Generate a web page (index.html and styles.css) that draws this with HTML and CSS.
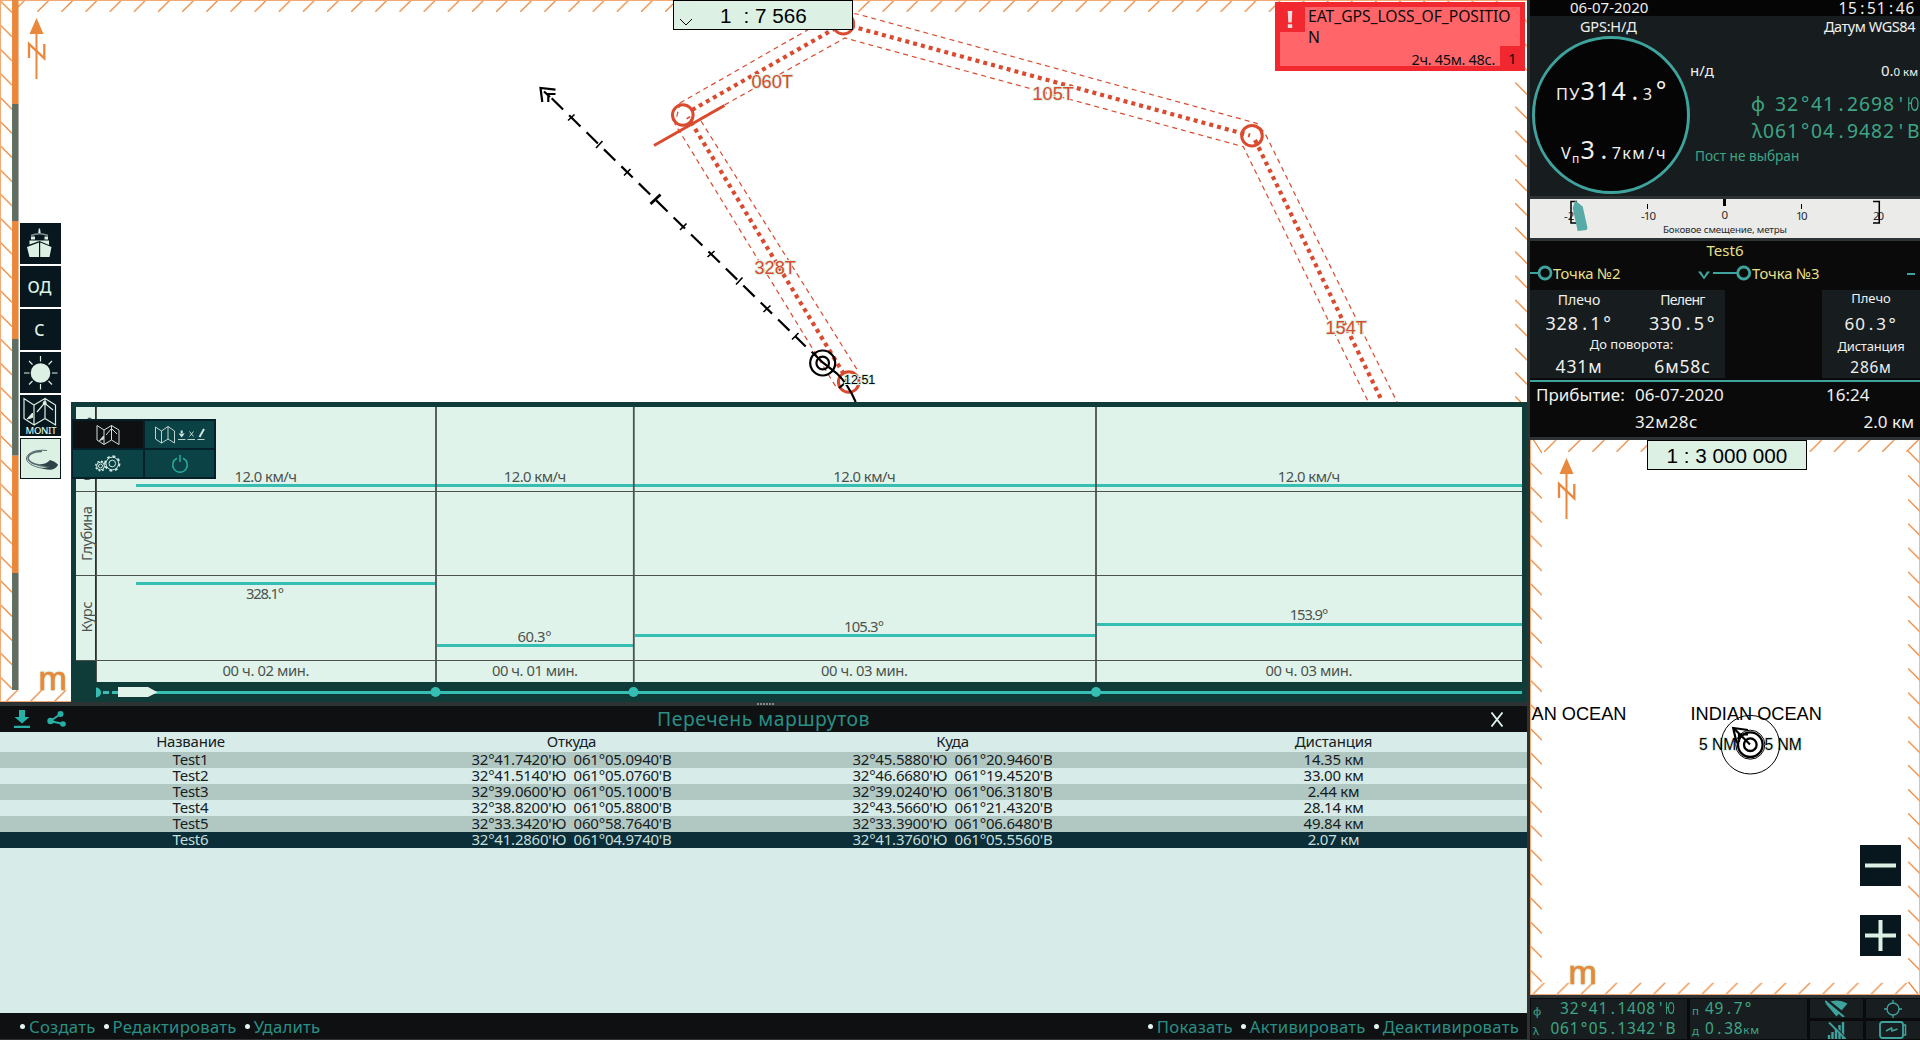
FILE: index.html
```html
<!DOCTYPE html>
<html lang="ru">
<head>
<meta charset="utf-8">
<title>Перечень маршрутов</title>
<link rel="stylesheet" href="styles.css">
</head>
<body>
<div class="app">
  <main class="main">
    <section class="chart">
      <svg class="chart-canvas" width="1527" height="702" viewBox="0 0 1527 702">
        <defs>
          <pattern id="hTop" patternUnits="userSpaceOnUse" x="13" y="0" width="24.15" height="12"><path class="hatch" d="M0 12 12 0"/></pattern>
          <pattern id="hLeft" patternUnits="userSpaceOnUse" x="0" y="0.5" width="12" height="24.15"><path class="hatch" d="M0 0 12 12"/></pattern>
          <pattern id="hRight" patternUnits="userSpaceOnUse" x="1515" y="82.3" width="12" height="24.15"><path class="hatch" d="M0 0 12 12"/></pattern>
          <pattern id="hBottom" patternUnits="userSpaceOnUse" x="5.7" y="690" width="24.15" height="12"><path class="hatch" d="M0 12 12 0"/></pattern>
        </defs>
        <rect x="18" y="0" width="1497" height="12" fill="url(#hTop)"/>
        <rect x="0" y="0" width="12" height="690" fill="url(#hLeft)"/>
        <rect x="1515" y="0" width="12" height="402" fill="url(#hRight)"/>
        <rect x="0" y="690" width="72" height="12" fill="url(#hBottom)"/>
        <path class="frame" d="M0 .5H1527M.5 0V702M0 701.5H72"/>
        <g class="scalebar">
          <path class="sb-a" d="M15.3 0V104M15.3 221V339M15.3 455.5V573"/>
          <path class="sb-b" d="M15.3 104V221M15.3 339V455.5M15.3 573V690"/>
        </g>
        <g class="north"><path class="north-fill" d="M36.5 18 43.5 34H29.5Z"/><path d="M36.5 33V79" stroke-width="2"/><path d="M29 58V44L44.3 58.3V44" stroke-width="2.3"/></g>
        <text class="unit" x="38.5" y="690" textLength="29">m</text>

        <g class="corridor">
          <path d="M680 103 838 12.500 857 14 1256.700 123.300 1265 133.300 1397 402"/>
          <path d="M701 118 845 38 1243.300 146.700 1368.300 402"/>
          <path d="M680 103 675 124 836 387"/>
          <path d="M701 121 858 371"/>
        </g>
        <g class="track">
          <path d="M848 381 688 117"/><path d="M692 110 841 25"/><path d="M843 24 1250 135.500"/><path d="M1255 140 1382 401"/>
        </g>
        <g class="waypoints">
          <circle cx="682.800" cy="115" r="10.300"/><circle cx="843.300" cy="23.700" r="10.300"/><circle cx="1252" cy="135.700" r="10.300"/><circle cx="848.700" cy="382" r="10.300"/>
          <path d="M654 145.500 724.500 105.500"/>
        </g>
        <g class="leg-label">
          <text x="751.500" y="88">060T</text><text x="754.500" y="273.500">328T</text><text x="1032.500" y="100">105T</text><text x="1325.500" y="333.500">154T</text>
        </g>
        <g class="vessel">
          <path d="M551.700 98.300 805.700 346.500" stroke-dasharray="15.900 8.450"/>
          <path d="M811.700 351.700 823 362.700 836.700 373.300Q848 384 855.700 402"/>
          <path d="M839 388 845 383"/>
          <circle cx="822.700" cy="363" r="12.500"/><circle cx="822.700" cy="363" r="6.300"/>
          <path d="M542.300 102 540.500 88 555.500 89.700M548.300 102V94H555.500M544 91.500 550 97"/>
          <path class="tick" d="M568 120.500 574.500 114.500M596 148 602.500 141M624 175.500 630.500 169M680 230 686.500 223.500M707.500 257 714.500 251M736 284.500 742.500 277.500M763.500 312 770.500 305.500M792 339.500 798.500 333"/>
          <path d="M650.500 204 660.500 194.500" stroke-width="2.800"/>
        </g>
        <text class="time-label" x="844" y="384">12:51</text>
      </svg>

      <div class="scale scale-main">
        <svg width="14" height="8" viewBox="0 0 14 8"><path d="M1 1 7 7 13 1" fill="none" stroke="#000"/></svg>
        <span class="scale-one">1</span><span>: 7 566</span>
      </div>

      <div class="alert">
        <span class="alert-icon"><svg width="6" height="17" viewBox="0 0 6 17"><path d="M.7 0H5.300L4.700 11.500H1.300ZM.8 13.300H5.200V17H.8Z" fill="#e4dede"/></svg></span>
        <p class="alert-text">EAT_GPS_LOSS_OF_POSITION</p>
        <span class="alert-time">2ч. 45м. 48с.</span><span class="alert-count">1</span>
      </div>

      <nav class="tools">
        <button class="tool"><svg width="41" height="41" viewBox="0 0 41 41"><g fill="#dcf1e4"><path d="M18.200 10 18.800 5.500H20L20.700 10ZM9.500 17.500H29V22L19.500 18 9.500 21.500Z"/><path d="M7 24 19 19.500V34H9.500ZM20.200 19.500 31.500 24 29.500 34H20.200Z"/><path d="M11 13.500H15V16.500H11ZM24.500 13.500H28V16.500H24.500Z"/></g><path d="M11 12.500Q19.500 9 28 12.500" fill="none" stroke="#7f9190" stroke-width="1.500"/></svg></button>
        <button class="tool">ОД</button>
        <button class="tool">С</button>
        <button class="tool"><svg width="41" height="41" viewBox="0 0 41 41"><circle cx="20.500" cy="21" r="9.800" fill="#dcf1e4"/><path d="M20.500 4V9.500M20.500 32V37.500M4 21H9.500M32 21H37.500M9 9 12.500 12.500M32 9 28.500 12.500M9 32.500 12.500 29M32 32.500 28.500 29" stroke="#dcf1e4" stroke-width="1.200"/></svg></button>
        <button class="tool tool-monit"><svg width="41" height="41" viewBox="0 0 41 41"><path d="M4 3.500V23.500L14 30V10ZM14 10 25 3.500V23.500L14 30M25 3.500 35.500 10V30L25 23.500M17 17 24.500 8 33 15" fill="none" stroke="#dcf1e4" stroke-width="1.200"/><path d="M7 24 12.500 18V22.500Z" fill="#dcf1e4" stroke="#dcf1e4"/><circle cx="24.700" cy="8" r="2" fill="#dcf1e4"/><text x="5.500" y="39" textLength="31">MONIT</text></svg></button>
        <button class="tool tool-light"><svg width="41" height="41" viewBox="0 0 41 41"><path d="M26 11.500C13 10 5 15 5.500 20 6 25 16 30 31 30" fill="none" stroke="#53686b" stroke-width="1"/><path d="M21 12.500C12 12 6.500 16 7.300 20 8.500 24 17 27 27 27.500" fill="none" stroke="#53686b" stroke-width="1.600"/><path d="M18 25.500Q26 25 29 21 34 22 37 25.500 36 29 31 30.500 24 30.500 21 29L28 28Z" fill="#2d4347"/></svg></button>
      </nav>

      <section class="profile">
        <svg width="1456" height="300" viewBox="71 402 1456 300">
          <path class="plot" d="M76 407H95V660H76ZM97 407H1522V682H97Z"/>
          <g class="values"><path d="M136 485.500H1522M136 583.500H435M437 645.500H633M635 635.500H1095M1097 624.500H1522"/></g>
          <path class="grid" d="M76 491.500H1522M76 575.500H1522M76 660.500H1522M96.500 407V682"/>
          <path class="grid-v" d="M436 407V682M633.800 407V682M1096 407V682"/>
          <g class="plot-text">
            <text x="265.700" y="481.700" textLength="62.500">12.0 км/ч</text><text x="535" y="481.700" textLength="62.500">12.0 км/ч</text><text x="864.500" y="481.700" textLength="62.500">12.0 км/ч</text><text x="1309" y="481.700" textLength="62.500">12.0 км/ч</text>
            <text x="265" y="598.700" textLength="38">328.1°</text><text x="534.500" y="642" textLength="34">60.3°</text><text x="864" y="631.700" textLength="40">105.3°</text><text x="1309" y="620" textLength="38.500">153.9°</text>
            <text x="266" y="676.300" textLength="87">00 ч. 02 мин.</text><text x="535" y="676.300" textLength="86">00 ч. 01 мин.</text><text x="864.500" y="676.300" textLength="87">00 ч. 03 мин.</text><text x="1309" y="676.300" textLength="87">00 ч. 03 мин.</text>
            <text transform="translate(91.500 449) rotate(-90)" textLength="64">Скорость</text><text transform="translate(91.500 533.500) rotate(-90)" textLength="55">Глубина</text><text transform="translate(91.500 617) rotate(-90)" textLength="31">Курс</text>
          </g>
          <g class="timeline"><path d="M103 692.500H109M112 692.500H118M150 692.500H1522"/><path class="dot" d="M96 687.500A5 5 0 0 1 96 697.500Z"/><circle class="dot" cx="435.500" cy="692" r="5"/><circle class="dot" cx="633.500" cy="692" r="5"/><circle class="dot" cx="1096" cy="692" r="5"/></g>
          <path fill="#e0f3ea" d="M118 687H148L157.500 692.300 148 697H118Z"/>
        </svg>
      </section>

      <div class="menu">
        <button class="menu-item active"><svg width="24" height="20" viewBox="0 0 24 20"><path d="M1 .5V15L8 19.500V5ZM8 5 15.500 .5V15L8 19.500M15.500 .5 23 5V19.500L15.500 15M10 10 15.500 3.500 21 9" fill="none" stroke="#d2dfdc"/><path d="M3.500 15.500 7.500 11V14Z" fill="#d2dfdc" stroke="#d2dfdc"/></svg></button>
        <button class="menu-item"><svg width="52" height="20" viewBox="0 0 52 20"><g fill="none" stroke="#cfe5df" stroke-width=".9"><path d="M1.500 2V14L7.500 18V6ZM7.500 6 14 1.500V14L7.500 18M14 1.500 20.500 6V18L14 14"/><path d="M24 14.500H31.500M33.500 14.500H41M43.500 14.500H50.500M35.500 6.500 39.500 11.500M39.500 6.500 35.500 11.500"/><path d="M27.700 5.500V8" stroke-width="2"/><path d="M50 4 45.500 12" stroke-width="2"/></g><path d="M24.700 8.500H30.700L27.700 12.500Z" fill="#cfe5df"/></svg></button>
        <button class="menu-item"><svg width="26" height="18" viewBox="0 0 26 18"><g fill="none" stroke="#d2e8e2"><circle cx="17.300" cy="8.500" r="6.300"/><circle cx="17.300" cy="8.500" r="3.300"/><circle cx="17.300" cy="8.500" r="7.300" stroke-width="1.700" stroke-dasharray="2.900 2.830"/><circle cx="5.500" cy="11" r="3.900"/><circle cx="5.500" cy="11" r="2"/><circle cx="5.500" cy="11" r="4.800" stroke-width="1.400" stroke-dasharray="1.900 1.870"/></g></svg></button>
        <button class="menu-item"><svg width="18" height="20" viewBox="0 0 18 20"><path d="M6 4.200A7.300 7.300 0 1 0 12 4.200M9 1V8" fill="none" stroke="#27aca0" stroke-width="1.500"/></svg></button>
      </div>
    </section>

    <div class="splitter"><i></i><i></i><i></i><i></i><i></i><i></i></div>

    <section class="routes">
      <header class="routes-head">
        <div class="head-icons">
          <svg width="16" height="18" viewBox="0 0 16 18"><path d="M5 0H11V7H15.500L8 13.500 .5 7H5ZM0 15.700H16V18H0Z" fill="#27b0a6"/></svg>
          <svg width="20" height="18" viewBox="0 0 20 18"><path d="M13.500 4 3.500 11 16 14" fill="none" stroke="#27b0a6" stroke-width="2"/><circle cx="13.500" cy="4" r="3" fill="#27b0a6"/><circle cx="3.500" cy="11" r="3.200" fill="#27b0a6"/><circle cx="16" cy="14" r="2.800" fill="#27b0a6"/></svg>
        </div>
        <h1>Перечень маршрутов</h1>
        <button class="close"><svg width="14" height="15" viewBox="0 0 14 15"><path d="M1.500 .5 12.500 14.500M12.500 .5 1.500 14.500" stroke="#e4f5ee" stroke-width="1.800"/></svg></button>
      </header>
      <div class="table">
        <div class="tr th"><span>Название</span><span>Откуда</span><span>Куда</span><span>Дистанция</span></div>
        <div class="tr alt"><span>Test1</span><span>32°41.7420'Ю&nbsp; 061°05.0940'В</span><span>32°45.5880'Ю&nbsp; 061°20.9460'В</span><span>14.35 км</span></div>
        <div class="tr"><span>Test2</span><span>32°41.5140'Ю&nbsp; 061°05.0760'В</span><span>32°46.6680'Ю&nbsp; 061°19.4520'В</span><span>33.00 км</span></div>
        <div class="tr alt"><span>Test3</span><span>32°39.0600'Ю&nbsp; 061°05.1000'В</span><span>32°39.0240'Ю&nbsp; 061°06.3180'В</span><span>2.44 км</span></div>
        <div class="tr"><span>Test4</span><span>32°38.8200'Ю&nbsp; 061°05.8800'В</span><span>32°43.5660'Ю&nbsp; 061°21.4320'В</span><span>28.14 км</span></div>
        <div class="tr alt"><span>Test5</span><span>32°33.3420'Ю&nbsp; 060°58.7640'В</span><span>32°33.3900'Ю&nbsp; 061°06.6480'В</span><span>49.84 км</span></div>
        <div class="tr selected"><span>Test6</span><span>32°41.2860'Ю&nbsp; 061°04.9740'В</span><span>32°41.3760'Ю&nbsp; 061°05.5560'В</span><span>2.07 км</span></div>
      </div>
      <footer class="routes-foot">
        <div><a>Создать</a><a>Редактировать</a><a>Удалить</a></div>
        <div><a>Показать</a><a>Активировать</a><a>Деактивировать</a></div>
      </footer>
    </section>
  </main>

  <aside class="side">
    <section class="nav">
      <div class="clock"><span class="date">06-07-2020</span><span class="mono">15<i>:</i>51<i>:</i>46</span></div>
      <div class="gps"><span class="gps-src">GPS:Н/Д</span><span>Датум WGS84</span></div>
      <div class="nav-body">
        <div class="dial">
          <div class="mono dial-row course"><small>ПУ</small>314<i>.</i><small>3</small><i>°</i></div>
          <div class="mono dial-row speed"><small>V</small><sub>п</sub>3<i>.</i><small>7км<i>/</i>ч</small></div>
        </div>
        <div class="position">
          <div class="depth"><span>н/д</span><span>0.<small>0 км</small></span></div>
          <div class="mono coord"><i>φ</i><i></i>32<i>°</i>41<i>.</i>2698<i>'</i><i class="wide">Ю</i></div>
          <div class="mono coord"><i>λ</i>061<i>°</i>04<i>.</i>9482<i>'</i><i>В</i></div>
          <div class="post">Пост не выбран</div>
        </div>
      </div>
    </section>

    <svg class="offset" width="390" height="39" viewBox="1530 199 390 39">
      <g class="offset-text"><text x="1564" y="220" textLength="17">-20</text><text x="1641" y="220" textLength="15">-10</text><text x="1721.500" y="219">0</text><text x="1796" y="220" textLength="11.500">10</text><text x="1873" y="220" textLength="11">20</text><text class="offset-name" x="1663" y="233" textLength="124">Боковое смещение, метры</text></g>
      <path d="M1577 201.500H1571V223H1577M1873 201.500H1879.300V223H1873" fill="none" stroke="#000" stroke-width="1.500"/>
      <path d="M1647.500 204V209M1801.500 204V209" stroke="#000"/><path d="M1724.500 199V206" stroke="#000" stroke-width="3"/>
      <path d="M1575.300 200.500 1582.700 206.500 1587.500 228 1586.500 230 1577.700 231 1572.700 208Z" fill="#57aaa5"/>
    </svg>

    <section class="route">
      <h2>Test6</h2>
      <div class="legs">
        <div class="leg"><svg width="23" height="16" viewBox="0 0 23 16"><path d="M0 8H9" stroke="#3fa39d" stroke-width="2"/><circle cx="15" cy="8" r="6" fill="none" stroke="#3fa39d" stroke-width="2.800"/></svg><span>Точка №2</span><svg class="chev" width="14" height="9" viewBox="0 0 14 9"><path d="M1 .5H4L7 5.500 10 .5H13L7 8.500Z" fill="#3fa39d"/></svg></div>
        <div class="leg next"><svg width="39" height="16" viewBox="0 0 39 16"><path d="M0 8H24" stroke="#3fa39d" stroke-width="2"/><circle cx="30.700" cy="8" r="6" fill="none" stroke="#3fa39d" stroke-width="2.800"/></svg><span>Точка №3</span><b></b></div>
      </div>
      <div class="cards">
        <div class="card current">
          <div class="pair labels"><span>Плечо</span><span>Пеленг</span></div>
          <div class="pair mono big"><span>328<i>.</i>1<i>°</i></span><span>330<i>.</i>5<i>°</i></span></div>
          <div class="turn">До поворота:</div>
          <div class="pair mono dist"><span>431м</span><span>6м58с</span></div>
        </div>
        <div class="card following"><span class="lbl">Плечо</span><span class="mono v1">60<i>.</i>3<i>°</i></span><span class="lbl l2">Дистанция</span><span class="mono v2">286м</span></div>
      </div>
      <div class="arrival"><span>Прибытие:</span><span>06-07-2020</span><span>16:24</span><span></span><span class="eta">32м28с</span><span class="left">2.0 км</span></div>
    </section>

    <section class="overview">
      <svg class="chart-canvas" width="390" height="555" viewBox="1530 440 390 555">
        <defs>
          <pattern id="oTop" patternUnits="userSpaceOnUse" x="1544" y="440" width="24.15" height="12"><path class="hatch" d="M0 12 12 0"/></pattern>
          <pattern id="oLeft" patternUnits="userSpaceOnUse" x="1530" y="462.200" width="12" height="24.170"><path class="hatch" d="M0 0 12 12"/></pattern>
          <pattern id="oRight" patternUnits="userSpaceOnUse" x="1908" y="451" width="12" height="24.150"><path class="hatch" d="M0 0 12 12"/></pattern>
          <pattern id="oBottom" patternUnits="userSpaceOnUse" x="1532.700" y="982.500" width="24.150" height="12"><path class="hatch" d="M0 12 12 0"/></pattern>
        </defs>
        <rect x="1543" y="440" width="377" height="12" fill="url(#oTop)"/><rect x="1530" y="462" width="12" height="521" fill="url(#oLeft)"/><rect x="1908" y="451" width="12" height="532" fill="url(#oRight)"/><rect x="1532" y="982.500" width="378" height="12" fill="url(#oBottom)"/>
        <path class="hatch" d="M1533.500 440 1542 453M1908.500 982 1918 994"/>
        <path class="frame" d="M1530.500 440V995M1919.700 440V995M1530 994.500H1920"/>
        <g class="north" transform="translate(1530 440)"><path class="north-fill" d="M36.500 18 43.500 34H29.500Z"/><path d="M36.500 33V79" stroke-width="2"/><path d="M29 58V44L44.300 58.300V44" stroke-width="2.300"/></g>
        <text class="unit" x="1568.500" y="984" textLength="29">m</text>
        <text class="sea" x="1531.500" y="719.700">AN OCEAN</text><text class="sea" x="1690.500" y="719.700">INDIAN OCEAN</text>
        <g class="range"><text x="1699" y="750">5 NM</text><text x="1764.500" y="750">5 NM</text></g>
        <g class="vessel"><circle cx="1750.300" cy="744.700" r="29.300" stroke-width="1"/><circle cx="1750.300" cy="744.700" r="14.500" stroke-width="1"/><circle cx="1750.300" cy="744.700" r="12.300" stroke-width="2.300"/><circle cx="1750.300" cy="744.700" r="6.300" stroke-width="2.300"/><path d="M1750 744.500 1733.500 728M1736.500 742.500 1733.200 728 1748 730M1739 742V734.500H1748"/></g>
      </svg>
      <div class="scale scale-over">1 : 3 000 000</div>
      <div class="zoom">
        <button class="tool"><svg width="31" height="31" viewBox="0 0 31 31"><path d="M0 15.500H31" stroke="#dcf1e4" stroke-width="4"/></svg></button>
        <button class="tool"><svg width="31" height="31" viewBox="0 0 31 31"><path d="M0 15.500H31M15.500 0V31" stroke="#dcf1e4" stroke-width="4"/></svg></button>
      </div>
    </section>

    <section class="status">
      <div class="cell tall pos"><div class="mono"><small>φ</small><span>32<i>°</i>41<i>.</i>1408<i>'</i><i class="wide">Ю</i></span></div><div class="mono"><small>λ</small><span>061<i>°</i>05<i>.</i>1342<i>'</i><i>В</i></span></div></div>
      <div class="cell tall brg"><div class="mono"><small>п</small><span>49<i>.</i>7<i>°</i></span></div><div class="mono"><small>д</small><span>0<i>.</i>38<small>км</small></span></div></div>
      <div class="cell"><svg width="23" height="17" viewBox="0 0 23 17"><path d="M.5 3.500Q11.500-2.500 22.500 3.500L11.500 16.500Z" fill="#3fa39d"/><path d="M1.500 .5 21 16" stroke="#181e20" stroke-width="3.500"/><path d="M0 1 19 17" stroke="#3fa39d" stroke-width="2"/></svg></div>
      <div class="cell"><svg width="18" height="18" viewBox="0 0 18 18"><circle cx="9" cy="9" r="6" fill="none" stroke="#3fa39d" stroke-width="1.300"/><path d="M9 0V3.500M9 14.500V18M0 9H3.500M14.500 9H18" stroke="#3fa39d" stroke-width="1.300"/></svg></div>
      <div class="cell"><svg width="20" height="18" viewBox="0 0 20 18"><path d="M2 18V14M5.500 18V11M9 18V7M12.500 18V4M16 18V1" stroke="#3fa39d" stroke-width="2.400"/><path d="M3 1 19 17.500" stroke="#181e20" stroke-width="2"/><path d="M2 1.500 18.500 18" stroke="#3fa39d" stroke-width="1.800"/></svg></div>
      <div class="cell"><svg width="28" height="18" viewBox="0 0 28 18"><rect x="1" y="1" width="23" height="16" rx="2.500" fill="none" stroke="#3fa39d" stroke-width="1.800"/><path d="M24 4H26.500V14H24" fill="none" stroke="#3fa39d" stroke-width="1.500"/><path d="M7 10 12.500 7 13 10 18.500 8" fill="none" stroke="#3fa39d" stroke-width="1.600"/></svg></div>
    </section>
  </aside>
</div>
</body>
</html>
```
FILE: styles.css
```css
* { box-sizing: border-box; }
body { margin: 0; width: 1920px; height: 1040px; overflow: hidden; font-family: "Noto Sans", sans-serif; font-size: 15px; }
button { border: 0; padding: 0; margin: 0; font: inherit; }
h1, h2, p { margin: 0; font-weight: 400; }
svg { display: block; flex: none; }
.app { display: grid; grid-template-columns: 1527px 390px; gap: 3px; height: 1040px; background: #2d3335; }
.main { display: flex; flex-direction: column; height: 1039px; min-width: 0; }

/* fixed-pitch readouts */
.mono { white-space: nowrap; letter-spacing: .05em; }
.mono i { display: inline-block; width: .622em; text-align: center; font-style: normal; letter-spacing: 0; }
.mono .wide { transform: scaleX(.64); transform-origin: 0 50%; }

/* chart */
.chart { position: relative; flex: none; height: 702px; background: #fff; overflow: hidden; }
.hatch { stroke: #ea8b42; stroke-width: 1.3; fill: none; }
.frame { stroke: #f2a973; stroke-width: 1; fill: none; }
.scalebar path { stroke-width: 6.500; }
.scalebar .sb-a { stroke: #e9883d; }
.scalebar .sb-b { stroke: #5f6e61; }
.north path { fill: none; stroke: #e9883d; }
.north .north-fill { fill: #e9883d; stroke: none; }
.unit { font: 34px "Liberation Sans", sans-serif; fill: #e9883d; stroke: #e9883d; stroke-width: .7; filter: drop-shadow(0 0 1px #a8e0b0); }
.corridor path { fill: none; stroke: #da4a2e; stroke-width: 1.200; stroke-dasharray: 5 4; }
.track path { fill: none; stroke: #da4a2e; stroke-width: 4.200; stroke-dasharray: 4 4.080; }
.waypoints circle, .waypoints path { fill: none; stroke: #da4a2e; stroke-width: 3; }
.leg-label { font: 18.200px "Liberation Sans", sans-serif; fill: #da4a2e; stroke: #dcf1e4; stroke-width: 2; paint-order: stroke; }
.vessel { fill: none; stroke: #000; stroke-width: 2.200; }
.vessel .tick { stroke-width: 1.600; }
.time-label { font: 12.500px "Liberation Sans", sans-serif; stroke: #dcf1e4; stroke-width: 2; paint-order: stroke; }
.scale { position: absolute; top: 0; height: 30px; border: 1px solid #000; background: #dcf1e4; font: 20.700px/29px "Liberation Sans", sans-serif; color: #000; white-space: pre; }
.scale-main { left: 673px; width: 180px; display: flex; padding-left: 5px; }
.scale-main svg { margin-top: 17px; }
.scale-one { margin: 0 12px 0 27px; }

.alert { position: absolute; left: 1275px; top: 2px; width: 250px; height: 69px; display: grid; grid-template-columns: 25px 1fr auto; grid-template-rows: 39px 20px; border: 5px solid #f1282f; background: rgba(255, 88, 92, .92); color: #0d0d0d; }
.alert-icon { display: grid; place-items: center; height: 25px; background: #f1282f; padding-right: 6px; }
.alert-text { grid-column: 2 / 4; padding-left: 3px; margin-top: -1px; line-height: 21px; font-size: 15.700px; letter-spacing: -.05px; word-break: break-all; width: 211px; }
.alert-time { grid-column: 1 / 3; text-align: right; padding-right: 5px; line-height: 26px; font-size: 14.500px; letter-spacing: -.3px; }
.alert-count { width: 20px; height: 20px; background: #f1282f; text-align: center; line-height: 25px; font-size: 14.500px; padding-left: 5px; }

.tools { position: absolute; left: 20px; top: 223px; display: flex; flex-direction: column; gap: 2px; }
.tool { width: 41px; height: 41px; background: #08161d; color: #dcf1e4; display: grid; place-items: center; font-size: 16px; font-weight: 500; padding-right: 2px; overflow: hidden; }
.tool svg { margin-right: -2px; }
.tool-monit text { font-size: 9.500px; fill: #dcf1e4; }
.tool-light { background: #dcf1e4; border: 1px solid #08161d; }

.profile { position: absolute; left: 71px; top: 402px; background: #0f3b38; }
.plot { fill: #e0f3ea; }
.values path, .timeline path { fill: none; stroke: #37beb3; stroke-width: 3; }
.timeline .dot { fill: #37beb3; stroke: none; }
.grid { fill: none; stroke: #4b534f; stroke-width: 1; }
.grid-v { stroke: #4b534f; stroke-width: 1.800; }
.plot-text { font-size: 14.800px; fill: #4b534f; text-anchor: middle; }

.menu { position: absolute; left: 72px; top: 419px; width: 144px; height: 60px; padding: 2px 2px 2px 1px; display: grid; grid-template-columns: 70px 69px; grid-template-rows: 27px 27px; gap: 2px; background: #06202a; }
.menu-item { display: grid; place-items: center; background: #0b4246; }
.menu-item.active { background: #0f1012; }

.splitter { flex: none; height: 4px; display: flex; justify-content: center; align-items: center; gap: 1px; background: #2d3335; padding-left: 4px; }
.splitter i { width: 2px; height: 2px; background: #83898a; }

/* route list */
.routes { flex: 1; display: flex; flex-direction: column; background: #d7ebe8; }
.routes-head { display: grid; grid-template-columns: 200px 1fr 200px; height: 26px; background: #0f1012; }
.head-icons { display: flex; gap: 17px; padding: 4px 0 0 14px; }
.routes h1 { text-align: center; font-size: 19.400px; line-height: 25px; letter-spacing: .5px; color: #2a8f84; }
.close { background: none; justify-self: end; padding: 0 23px 0 0; }
.table { flex: 1; color: #16201f; font-size: 15px; }
.tr { display: grid; grid-template-columns: repeat(4, 381px); height: 16px; line-height: 14px; text-align: center; letter-spacing: -.22px; }
.th { height: 20px; line-height: 19px; }
.alt { background: #b1c8c2; }
.selected { background: #0c2e38; color: #c5dedb; }
.routes-foot { display: flex; justify-content: space-between; height: 26px; padding: 0 8px 0 20px; background: #0f1012; color: #2a8f84; font-size: 16.700px; line-height: 25px; }
.routes-foot div { display: flex; gap: 8px; }
.routes-foot a { display: flex; align-items: center; gap: 4px; letter-spacing: .25px; }
.routes-foot a::before { content: ""; width: 5px; height: 5px; border-radius: 50%; background: #e4f5ee; }

/* instruments */
.side { display: flex; flex-direction: column; gap: 3px; color: #f0f0ee; }
.nav { height: 196px; background: #171d1f; }
.clock { display: flex; justify-content: space-between; height: 16px; padding: 0 5px 0 40px; background: #050505; line-height: 15px; }
.clock .mono { font-size: 15.400px; line-height: 17px; }
.gps { display: flex; justify-content: space-between; height: 20px; padding: 0 5px 0 50px; line-height: 21px; font-size: 14.500px; letter-spacing: -.2px; }
.gps span + span { letter-spacing: -.45px; }
.nav-body { display: grid; grid-template-columns: 160px 230px; }
.dial { width: 158px; height: 158px; margin-left: 2px; border: 3px solid #3fa39d; border-radius: 50%; background: #050505; font-size: 25px; }
.dial-row { height: 34px; line-height: 34px; }
.dial-row small { font-size: 16.300px; }
.dial-row sub { font-size: 12px; line-height: 0; vertical-align: -4px; }
.course { margin: 34px 0 0 21px; }
.speed { margin: 25px 0 0 26px; }
.depth { display: flex; justify-content: space-between; height: 45px; padding: 24px 2px 0 0; line-height: 20px; font-size: 15px; }
.depth small { font-size: 11.500px; }
.coord { height: 27px; line-height: 27px; font-size: 19.300px; text-align: right; color: #3fa585; padding-right: 1px; }
.coord:nth-child(2) { margin-top: 9px; }
.post { margin: 2px 0 0 5px; line-height: 20px; font-size: 13.600px; color: #3fa585; }
.offset { background: #ebebea; }
.offset-text { font-size: 11.500px; fill: #2a2a2a; }
.offset-text .offset-name { font-size: 9.800px; }

.route { height: 196px; background: #0a0a0b; }
.route h2 { height: 24px; line-height: 18px; font-size: 15px; text-align: center; color: #e8e08a; }
.legs { display: grid; grid-template-columns: 183px 207px; height: 25px; color: #e8e08a; line-height: 17px; }
.leg { display: flex; }
.leg span { font-size: 14.800px; letter-spacing: -.1px; }
.chev { margin: 6px 2px 0 auto; }
.leg b { width: 8px; height: 2px; margin: 8px 5px 0 auto; background: #3fa39d; }
.cards { display: flex; justify-content: space-between; height: 92px; border-bottom: 2px solid #3fa39d; }
.card { height: 88px; background: #171d1f; }
.current { width: 195px; }
.following { width: 98px; display: flex; flex-direction: column; align-items: center; font-size: 13px; }
.pair { display: flex; }
.pair span { flex: none; width: 98px; text-align: center; }
.pair span + span { width: 97px; padding-left: 12px; }
.labels { line-height: 19px; font-size: 14px; height: 22px; }
.labels span + span { letter-spacing: -.7px; }
.big { font-size: 18px; line-height: 22px; height: 27px; }
.turn { font-size: 13px; line-height: 11px; height: 19px; padding-left: 8px; text-align: center; }
.dist { font-size: 17.500px; line-height: 17px; }
.lbl { line-height: 17px; height: 24px; }
.v1 { font-size: 17px; line-height: 20px; height: 25px; }
.l2 { height: 20px; line-height: 15px; letter-spacing: -.2px; }
.v2 { font-size: 15.400px; line-height: 17px; }
.arrival { display: grid; grid-template-columns: 99px 191px 100px; grid-template-rows: 26.5px 26px; padding: 1px 0 0 6px; font-size: 17px; line-height: 23px; }
.arrival .eta { letter-spacing: .4px; }
.arrival .left { text-align: right; padding-right: 12px; }

.overview { position: relative; height: 555px; background: #fff; overflow: hidden; }
.scale-over { left: 117px; width: 160px; text-align: center; }
.sea { font: 18.200px "Liberation Sans", sans-serif; }
.range { font: 15.600px "Liberation Sans", sans-serif; stroke: #dcf1e4; stroke-width: 2; paint-order: stroke; }
.zoom { position: absolute; left: 330px; top: 405px; display: flex; flex-direction: column; gap: 29px; }
.zoom .tool { padding: 0; }
.zoom .tool svg { margin: 0; }

.status { display: grid; grid-template-columns: 156px 117px 53px 54px; grid-template-rows: 19px 18px; gap: 3px; padding: 1px 0 0 1px; height: 42px; background: #0a0b0c; color: #3fa585; }
.cell { background: #181e20; display: grid; place-items: center; overflow: hidden; }
.tall { grid-row: 1 / 3; place-items: normal; display: flex; flex-direction: column; font-size: 15.400px; padding: 0 0 0 2px; }
.tall div { display: flex; height: 20px; line-height: 20px; }
.tall small { font-size: 11.500px; }
.tall div > small { flex: none; line-height: 24px; width: 13px; letter-spacing: 0; }
.pos div { justify-content: space-between; padding-right: 12px; }
```
